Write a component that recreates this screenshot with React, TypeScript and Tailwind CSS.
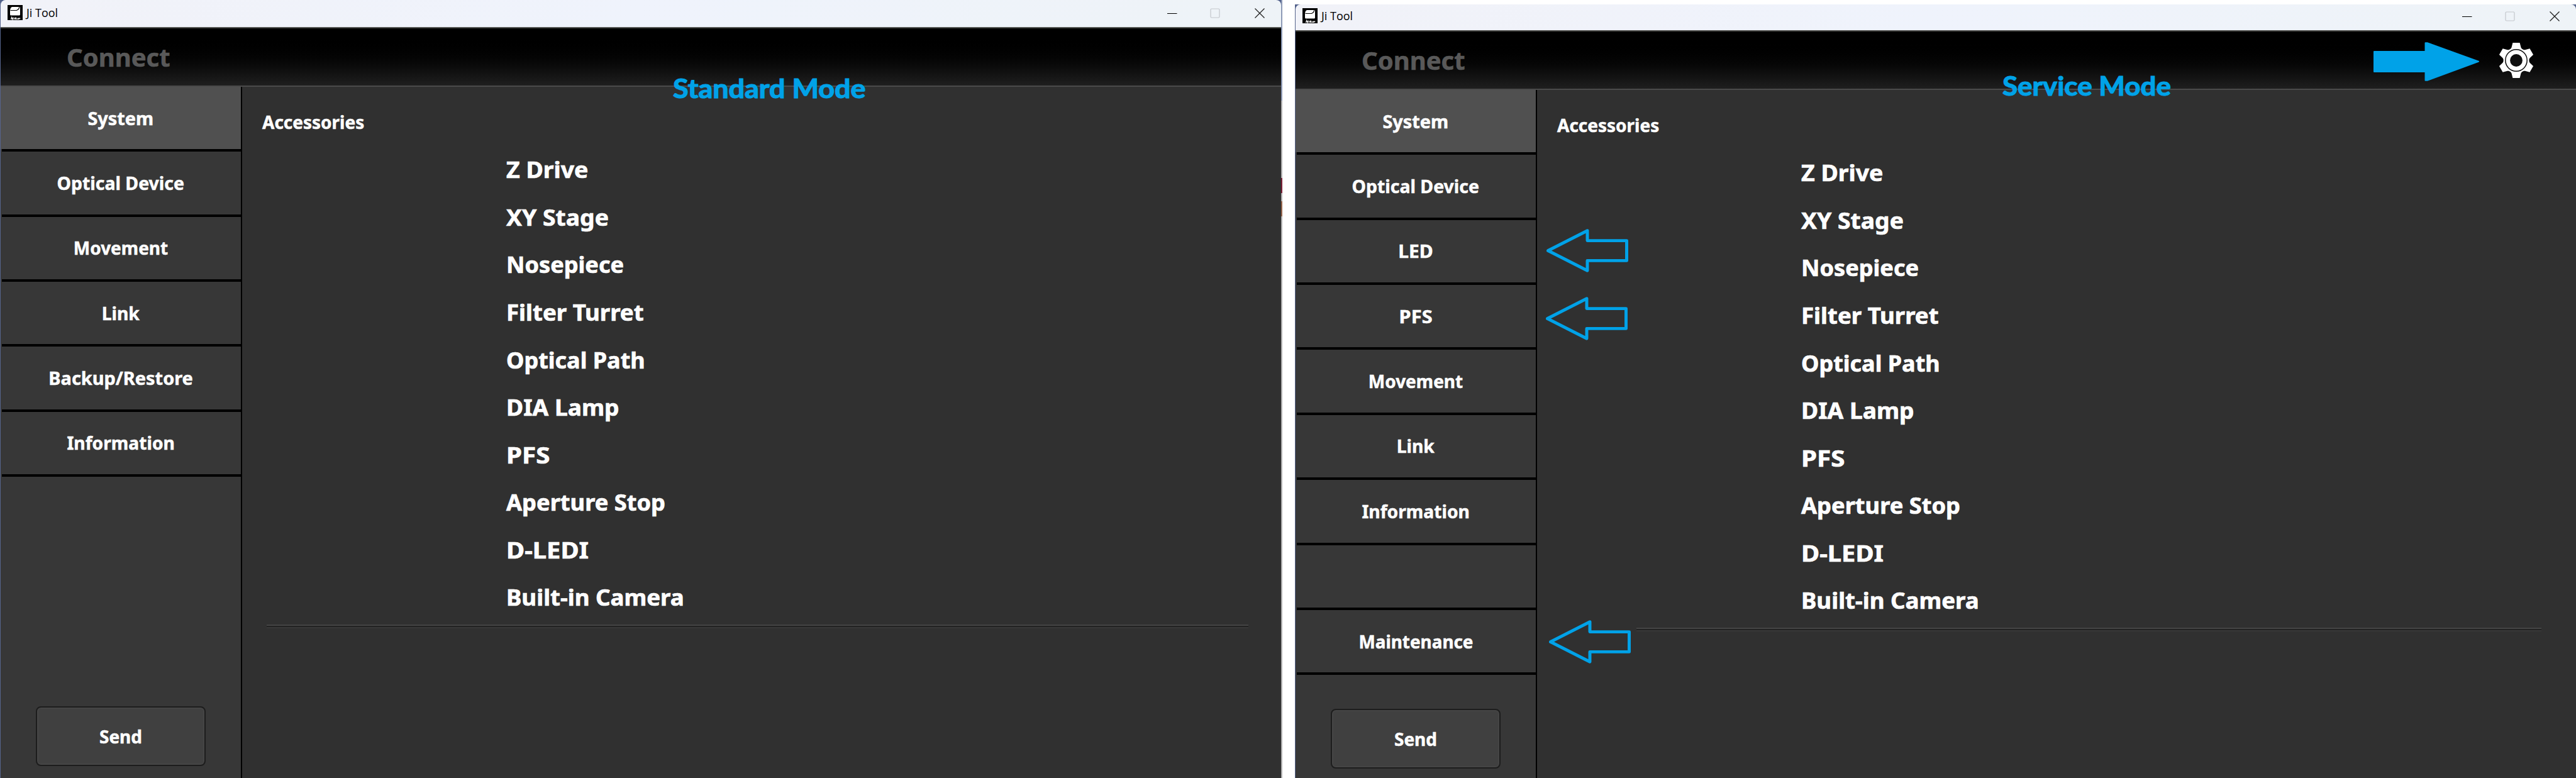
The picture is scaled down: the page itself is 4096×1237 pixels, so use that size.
import React from "react";

type Label = { text: string; fit: string };

const accessories: Label[] = [
  { text: "Z Drive", fit: "scale-x-[1.048]" },
  { text: "XY Stage", fit: "scale-x-[1.045]" },
  { text: "Nosepiece", fit: "scale-x-[1.013]" },
  { text: "Filter Turret", fit: "scale-x-[1.027]" },
  { text: "Optical Path", fit: "scale-x-[1.008]" },
  { text: "DIA Lamp", fit: "scale-x-[1.04]" },
  { text: "PFS", fit: "scale-x-[1.13]" },
  { text: "Aperture Stop", fit: "scale-x-[1.016]" },
  { text: "D-LEDI", fit: "scale-x-[1.115]" },
  { text: "Built-in Camera", fit: "scale-x-[1.027]" },
];

const system: Label = { text: "System", fit: "scale-x-[1.03]" };
const opticalDevice: Label = { text: "Optical Device", fit: "scale-x-[1.016]" };
const led: Label = { text: "LED", fit: "scale-x-[1.07]" };
const pfs: Label = { text: "PFS", fit: "scale-x-[1.1]" };
const movement: Label = { text: "Movement", fit: "scale-x-[1]" };
const link: Label = { text: "Link", fit: "scale-x-[1.012]" };
const backup: Label = { text: "Backup/Restore", fit: "scale-x-[1.033]" };
const information: Label = { text: "Information", fit: "scale-x-[1.007]" };
const maintenance: Label = { text: "Maintenance", fit: "scale-x-[0.995]" };
const blank: Label = { text: "", fit: "" };

const standardMenu = [system, opticalDevice, movement, link, backup, information];
const serviceMenu = [system, opticalDevice, led, pfs, movement, link, information, blank, maintenance];

function AppIcon() {
  return (
    <svg className="block h-[24px] w-[24px]" viewBox="0 0 24 24">
      <rect width="24" height="24" fill="#000" />
      <path d="M5 4.500 7 3H20V15Q20 16.500 18.500 16.500H5.500Q4 16.500 4 15V8Z" fill="#fff" />
      <path d="M4.500 8.500H14.500L17.500 6.500 19 3" fill="none" stroke="#000" strokeWidth="1.200" />
      <path
        d="M5.500 23 6.500 19.500 8 23 9 19.500M11 20 10 23M13 19.500 12 23M14.500 20.500 13 21.500 14.500 23M17 20.500 16 22.500H17.500L18.500 20.500M19 22.500 20 20.500"
        stroke="#fff"
        strokeWidth="1.200"
        fill="none"
      />
    </svg>
  );
}

function WindowButtons() {
  return (
    <svg className="mr-[26px] block h-[16px] w-[155px]" viewBox="0 0 155 16" fill="none">
      <path d="M0 8.500H15.500" stroke="#000" />
      <rect x="69" y="1" width="14" height="14" rx="1.500" stroke="#c3c7cc" strokeWidth="1.200" />
      <path d="M139.500 .5 154.500 15.500M154.500 .5 139.500 15.500" stroke="#222" strokeWidth="1.300" />
    </svg>
  );
}

function Gear() {
  return (
    <svg className="mr-[68px] block h-[56px] w-[54px]" viewBox="-27 -28 54 56">
      <g fill="#fff">
        <circle r="20.500" />
        <path d="M-9 -18 L-7.500 -20.500 L-5.600 -28 H5.600 L7.500 -20.500 L9 -18Z" />
        <path d="M-9 -18 L-7.500 -20.500 L-5.600 -28 H5.600 L7.500 -20.500 L9 -18Z" transform="rotate(60)" />
        <path d="M-9 -18 L-7.500 -20.500 L-5.600 -28 H5.600 L7.500 -20.500 L9 -18Z" transform="rotate(120)" />
        <path d="M-9 -18 L-7.500 -20.500 L-5.600 -28 H5.600 L7.500 -20.500 L9 -18Z" transform="rotate(180)" />
        <path d="M-9 -18 L-7.500 -20.500 L-5.600 -28 H5.600 L7.500 -20.500 L9 -18Z" transform="rotate(240)" />
        <path d="M-9 -18 L-7.500 -20.500 L-5.600 -28 H5.600 L7.500 -20.500 L9 -18Z" transform="rotate(300)" />
      </g>
      <circle r="17.200" fill="none" stroke="#0c0c0c" strokeWidth="1.500" />
      <circle r="9.900" fill="#0f0f0f" />
    </svg>
  );
}

function OutlineArrow({ place }: { place: string }) {
  return (
    <svg className={place} viewBox="0 0 131 69" fill="none">
      <path d="M2.500 34.500 65.500 2.500V18.500H128.500V50.500H65.500V66.500Z" stroke="#00a2e8" strokeWidth="5" strokeLinejoin="round" />
    </svg>
  );
}

function MenuItem({ label, active }: { label: Label; active: boolean }) {
  return (
    <li className="flex h-[103.360px] shrink-0 flex-col">
      <div className={active ? "flex flex-1 items-center justify-center bg-[#505050]" : "flex flex-1 items-center justify-center"}>
        {label.text && <span className={label.fit}>{label.text}</span>}
      </div>
      <div className="ml-[2px] h-[4px] bg-black" />
    </li>
  );
}

function ToolWindow({ menu, service = false }: { menu: Label[]; service?: boolean }) {
  return (
    <section className="flex h-full w-[2036px] shrink-0 flex-col font-['Noto_Sans',sans-serif]">
      <div className={service ? "h-[41px] shrink-0 bg-[#4f5f8a]" : "h-[43px] shrink-0 bg-[#4f5f8a]"}>
        <div className="flex h-full items-end justify-between rounded-t-[8px] bg-linear-to-r from-[#f1f2f8] via-[#eff3fc] to-[#eef3f7] pb-[11px]">
          <div className="ml-[11px] flex items-center gap-[6px]">
            <AppIcon />
            <span className="font-['Open_Sans',sans-serif] text-[18px] leading-[24px] text-black">Ji Tool</span>
          </div>
          <div className="pb-[3px]">
            <WindowButtons />
          </div>
        </div>
      </div>
      <header className="flex h-[95px] shrink-0 items-center justify-between border-y-2 border-t-[#4f504d] border-b-[#4a4a4a] bg-linear-to-b from-black from-10% to-[#1f1f1f]">
        <h1 className="ml-[105px] text-[40px] leading-none font-bold text-[#595959] [-webkit-text-stroke:0.6px_#595959]">Connect</h1>
        {service && <Gear />}
      </header>
      <div className="flex min-h-0 flex-1">
        <nav className="flex w-[384px] shrink-0 flex-col justify-between border-r-2 border-black bg-[#373737]">
          <ul className="text-[28px] leading-none font-bold text-white [-webkit-text-stroke:0.5px_#fff]">
            {menu.map((label, i) => (
              <MenuItem key={i} label={label} active={i === 0} />
            ))}
          </ul>
          <button
            className={
              service
                ? "mb-[15px] ml-[56px] flex h-[95px] w-[270px] items-center justify-center rounded-[8px] border-2 border-[#1d1d1d] bg-[#404040] text-[28px] leading-none font-bold text-white shadow-[inset_0_0_0_2px_#454545] [-webkit-text-stroke:0.5px_#fff]"
                : "mb-[19px] ml-[56px] flex h-[95px] w-[270px] items-center justify-center rounded-[8px] border-2 border-[#1d1d1d] bg-[#404040] text-[28px] leading-none font-bold text-white shadow-[inset_0_0_0_2px_#454545] [-webkit-text-stroke:0.5px_#fff]"
            }
          >
            Send
          </button>
        </nav>
        <main className="flex flex-1 flex-col bg-[#303030]">
          <h2 className="mt-[36px] ml-[32px] text-[28px] leading-[40px] font-bold text-white [-webkit-text-stroke:0.5px_#fff]">Accessories</h2>
          <ul className="mt-[18.500px] ml-[420px] text-[35.700px] leading-none font-bold text-white [-webkit-text-stroke:0.7px_#fff]">
            {accessories.map(({ text, fit }) => (
              <li key={text} className="flex h-[75.540px] items-center">
                <span className={`origin-left ${fit}`}>{text}</span>
              </li>
            ))}
          </ul>
          <div
            className={
              service
                ? "mt-[5px] mr-[55px] ml-[158px] h-[6px] border-y-2 border-t-[#444] border-b-[#383838] bg-[#222]"
                : "mt-[5px] mr-[52px] ml-[39px] h-[6px] border-y-2 border-t-[#444] border-b-[#383838] bg-[#222]"
            }
          />
        </main>
      </div>
    </section>
  );
}

export default function App() {
  return (
    <div className="relative flex h-[1237px] w-[4096px] overflow-hidden bg-white">
      <div className="w-px bg-[#56648c]" />
      <ToolWindow menu={standardMenu} />
      <div className="flex w-[2px] flex-col bg-[#b0b0b0]">
        <div className="h-[160px] bg-[#8d9ab6]" />
        <div className="mt-[123px] h-[24px] bg-[#7c2138]" />
        <div className="mt-[13px] h-[24px] bg-[#96654c]" />
      </div>
      <div className="ml-[20px] flex pt-[7px]">
        <div className="w-px bg-[#56648c]" />
        <ToolWindow menu={serviceMenu} service />
      </div>

      <div className="absolute top-[115px] left-[1070px] origin-left scale-x-[1.07] font-['Lato',sans-serif] text-[42px] leading-[50px] font-bold whitespace-nowrap text-[#00a2e8] [-webkit-text-stroke:1.2px_#00a2e8]">
        Standard Mode
      </div>
      <div className="absolute top-[111px] left-[3184px] origin-left scale-x-[1.047] font-['Lato',sans-serif] text-[42px] leading-[50px] font-bold whitespace-nowrap text-[#00a2e8] [-webkit-text-stroke:1.2px_#00a2e8]">
        Service Mode
      </div>
      <svg className="absolute top-[66px] left-[3774px] h-[64px] w-[169px]" viewBox="0 0 170 64">
        <path d="M1 16H83V2H86L168 31.700 86 62H83V48H1Z" fill="#00a2e8" stroke="#00a2e8" strokeWidth="2" strokeLinejoin="round" />
      </svg>
      <OutlineArrow place="absolute top-[364px] left-[2459px] h-[69px] w-[130px]" />
      <OutlineArrow place="absolute top-[472px] left-[2458px] h-[69px] w-[130px]" />
      <OutlineArrow place="absolute top-[986px] left-[2463px] h-[69px] w-[130px]" />
    </div>
  );
}
